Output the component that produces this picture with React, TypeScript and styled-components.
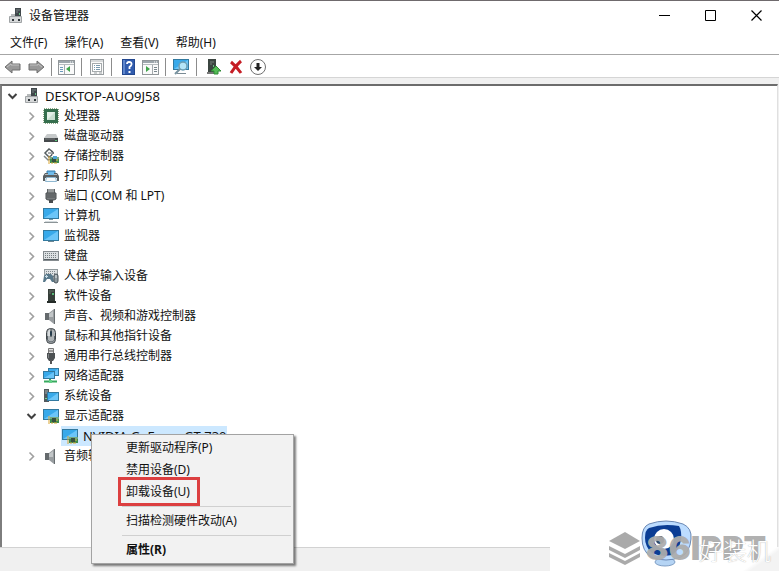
import React from "react";
import styled, { createGlobalStyle, css } from "styled-components";

const GlobalStyle = createGlobalStyle`
  * { box-sizing: border-box; }
  body {
    margin: 0;
    background: #fff;
    color: #111;
    font: 12px/20px "Noto Sans", "Noto Sans CJK SC", sans-serif;
  }
  button { font: inherit; color: inherit; background: none; border: 0; padding: 0; }
  svg { display: block; flex-shrink: 0; }
`;

/* ---------- window frame ---------- */

const Window = styled.div`
  position: relative;
  display: flex;
  flex-direction: column;
  min-height: 100vh;
  overflow: hidden;
  border-top: 1px solid #6f6a6d;
`;

const TitleBar = styled.header`
  display: flex;
  align-items: center;
  height: 29px;
  padding-left: 8px;
`;

const Title = styled.h1`
  flex: 1;
  margin: 0 0 0 5px;
  font-size: 12px;
  font-weight: 400;
`;

const CaptionButton = styled.button`
  display: grid;
  place-items: center;
  width: 46px;
  height: 29px;
`;

const MenuBar = styled.nav`
  display: flex;
  gap: 17px;
  height: 25px;
  padding: 3px 10px 0;
  border-bottom: 1px solid #a6a6a6;
`;

const MenuBarItem = styled.button`
  white-space: nowrap;
  line-height: 20px;
  height: 20px;
`;

const Toolbar = styled.div`
  display: flex;
  align-items: center;
  gap: 6px;
  height: 23px;
  padding: 1px 4px 0;
  border-bottom: 1px solid #d5d5d5;
`;

const ToolGroup = styled.div<{ $inset?: number }>`
  display: flex;
  align-items: center;
  gap: 7px;
  padding-left: ${(p) => p.$inset ?? 0}px;
`;

const ToolButton = styled.button`
  display: grid;
  place-items: center;
  height: 20px;
`;

const Divider = styled.span`
  width: 1px;
  height: 18px;
  background: #8c8c8c;
`;

const Client = styled.main`
  display: flex;
  flex: 1;
  padding: 6px 1px 0 0;
  background: #f0f0f0;
`;

const TreePane = styled.div`
  flex: 1;
  border-top: 2px solid #6c6c6c;
  border-left: 2px solid #7d7d7d;
  border-right: 1px solid #e0e0e0;
  background: #fff;
`;

const StatusBar = styled.footer`
  display: flex;
  height: 24px;
  border-top: 1px solid #d2d2d2;
  background: #f0f0f0;
`;

const StatusBlank = styled.div`
  margin-left: auto;
  margin-top: -1px;
  width: 229px;
  background: linear-gradient(145deg, #fff 86%, #f3f3f3 89%);
`;

/* ---------- tree ---------- */

const TreeList = styled.ul`
  list-style: none;
  margin: 0;
  padding: 0;
`;

const TreeItem = styled.li`
  position: relative;
`;

const TreeRow = styled.div<{ $level: number }>`
  display: flex;
  align-items: center;
  height: 20px;
  padding-left: ${(p) => 2 + p.$level * 19}px;
`;

const Expander = styled.button`
  display: grid;
  place-items: center;
  width: 16px;
  height: 20px;
  margin-right: 3px;
`;

const ExpanderSpace = styled.span`
  width: 19px;
`;

const NodeLabel = styled.span<{ $selected?: boolean; $latin?: boolean }>`
  display: flex;
  align-items: center;
  gap: 5px;
  height: 20px;
  padding: 0 0 0 1px;
  white-space: nowrap;
  font-size: ${(p) => (p.$latin ? 13 : 12)}px;
  ${(p) => p.$selected && css`background: #cce8ff;`}
`;

/* ---------- context menu ---------- */

const ContextMenu = styled.div`
  position: absolute;
  z-index: 2;
  top: 8px;
  left: 89px;
  display: flex;
  flex-direction: column;
  width: 203px;
  padding: 2px;
  border: 1px solid #a3a3a3;
  background: #f2f2f2;
  box-shadow: 2px 2px 2px rgba(0, 0, 0, 0.5);
`;

const ContextItem = styled.button<{ $strong?: boolean }>`
  height: 22px;
  padding-left: 32px;
  line-height: 22px;
  text-align: left;
  white-space: nowrap;
  font-weight: ${(p) => (p.$strong ? 700 : 400)};
`;

const Highlight = styled.span`
  position: relative;

  &::after {
    content: "";
    position: absolute;
    inset: -6px -10px -6px -8px;
    border: 3px solid #dc3f40;
  }
`;

const ContextRule = styled.hr`
  width: calc(100% - 28px);
  margin: 3px 0 3px 28px;
  border: 0;
  border-top: 1px solid #d0d0d0;
`;

/* ---------- watermark ---------- */

const Watermark = styled.div`
  position: absolute;
  right: 6px;
  bottom: 0;
  width: 165px;
  height: 52px;
`;

const WatermarkArt = styled.svg`
  position: absolute;
  inset: 0;
`;

const SiteName = styled.span`
  position: absolute;
  right: 2px;
  top: 17px;
  color: #fff;
  font: 300 24px/28px "Noto Sans CJK SC", sans-serif;
  text-shadow: 0 0 1px #999;
`;

const BrandName = styled.span`
  position: absolute;
  left: 38px;
  top: 12px;
  color: rgba(172, 172, 172, 0.94);
  font: 900 33px/34px Inter, "Liberation Sans", sans-serif;
`;

/* ---------- icons ---------- */

const icon = (body: React.ReactNode, width = 16, height = 16) => (
  <svg width={width} height={height} viewBox={`0 0 ${width} ${height}`} aria-hidden="true">
    {body}
  </svg>
);

const Screen = ({ x, y, w, h }: { x: number; y: number; w: number; h: number }) => (
  <g>
    <rect x={x} y={y} width={w} height={h} fill="#32799f" />
    <rect x={x + 1} y={y + 1} width={w - 2} height={h - 2} fill="#38a9ea" />
    <path d={`M${x + 1} ${y + h - 1}L${x + w - 1} ${y + 1}v${h - 2}z`} fill="#6bc5f8" />
  </g>
);

const Card = () => (
  <g>
    <path d="M7 9h9v6H7z" fill="#3b8c50" />
    <path d="M7 9h9v2H7z" fill="#77a982" />
    <path d="M9 10h4v4H9z" fill="#365040" />
    <path d="M6 8v8M8 15h2m1 0h3" stroke="#d9a632" />
    <path d="M13 12h2" stroke="#e5c04a" />
  </g>
);

const icons = {
  host: icon(
    <>
      <path d="M7 0h6v9H7z" fill="#40474b" />
      <path d="M8 2h4M8 4h2" stroke="#7d8789" />
      <path d="M11 5h1v2h-1z" fill="#69c184" />
      <path d="M3 6h4v3H3z" fill="#b7babb" />
      <path d="M1.500 8.500h12v6h-12z" fill="#d6d8d9" stroke="#a0a4a6" />
      <path d="M4 11h2v2H4zm6 0h2v2h-2z" fill="#30363a" />
    </>
  ),
  cpu: icon(
    <>
      <rect x="1" y="1" width="14" height="14" fill="none" stroke="#8fa888" strokeWidth="2" strokeDasharray="1 1" />
      <rect x="1" y="1" width="14" height="14" fill="#356e4d" />
      <path d="M4 4h8v8H4z" fill="#c9dfd0" />
      <path d="M4 12V4h8z" fill="#e3f0e7" />
    </>
  ),
  disk: icon(
    <>
      <path d="M4 6h9l2 4H1z" fill="#c6c9ca" />
      <path d="M1 10h14v4H1z" fill="#45494b" />
      <path d="M2 11h10" stroke="#74797b" />
      <path d="M12 12h2v1h-2z" fill="#59c97a" />
    </>
  ),
  storage: icon(
    <>
      <path d="M10 4L6 1 2 5l4 4 3-2" fill="none" stroke="#555d60" strokeWidth="1.500" />
      <path d="M5 5h5M8 3l3 2-3 2" fill="none" stroke="#555d60" />
      <path d="M1 8l4 4 3-1" fill="none" stroke="#7c8588" strokeWidth="1.500" />
      <Card />
      <path d="M10 8h4v3h-4z" fill="#4fa5d4" />
    </>
  ),
  printer: icon(
    <>
      <path d="M4 3h8v3H4z" fill="#67afe0" stroke="#3781b3" />
      <path d="M2 5h12l2 3v5h-2v-3H2v3H0V8z" fill="#5a6063" />
      <path d="M2 6.500h12" stroke="#b3b9bc" />
      <path d="M3.500 9.500h9l1 4h-11z" fill="#f6fafc" stroke="#8eb7d0" />
      <path d="M5 4h6v3H5z" fill="#70bcec" />
    </>
  ),
  port: icon(
    <>
      <path d="M4 1h8v5H4z" fill="#5e6264" />
      <path d="M6 1v4m2-4v4m2-4v4" stroke="#d1d4d4" />
      <path d="M3 5h10v6l-2 1H5l-2-1z" fill="#777b7d" stroke="#4a4e50" />
      <path d="M5 6v4m2-4v4m2-4v4m2-4v4" stroke="#535759" />
      <path d="M6 12h4v3H6z" fill="#474b4d" />
    </>
  ),
  computer: icon(
    <>
      <Screen x={0} y={0} w={16} h={11} />
      <path d="M6 11h4v1H6z" fill="#739aac" />
      <path d="M1 14.500h14" stroke="#8c9497" />
      <path d="M2 13.500h12" stroke="#d3dadd" />
    </>
  ),
  monitor: icon(
    <>
      <Screen x={0} y={2} w={16} h={11} />
      <path d="M5 13.500h6" stroke="#6f8792" />
    </>
  ),
  keyboard: icon(
    <>
      <rect x=".5" y="3.500" width="15" height="9" fill="#dce0e2" stroke="#858b8f" />
      <path d="M2 5.500h12M2 7.500h12M2 9.500h12" stroke="#777e82" strokeDasharray="1 1" />
      <path d="M1 11.500h14" stroke="#596166" />
    </>
  ),
  hid: icon(
    <>
      <rect x="1.500" y="1.500" width="13" height="7" fill="#dde1e3" stroke="#929a9d" />
      <path d="M3 3.500h10M3 5.500h10" stroke="#7e878b" strokeDasharray="1 1" />
      <path d="M1 8l2-2h5l2 2 1 6H9l-2-3H4l-2 3H0z" fill="#58788a" />
      <path d="M3.500 7v3M2 8.500h3" stroke="#c7dce6" />
      <rect x="11" y="6" width="4" height="9" rx="2" fill="#8c989d" stroke="#465157" />
      <path d="M13 7v3" stroke="#e6eaec" />
    </>
  ),
  software: icon(
    <>
      <path d="M5 1h7v12H5z" fill="#353e39" />
      <path d="M6 3h5M6 5h2" stroke="#68736c" />
      <path d="M9 5h2v2H9z" fill="#59b878" />
      <path d="M4 13h9v2H4z" fill="#252b28" />
    </>
  ),
  speaker: icon(
    <>
      <path d="M2 5h4v7H2z" fill="#656a6d" />
      <path d="M6 5l5-4v15l-5-4z" fill="#989da0" />
      <path d="M6 6l4-3v6H6z" fill="#c2c6c8" />
      <path d="M11.500 1v15" stroke="#686e71" />
    </>
  ),
  mouse: icon(
    <>
      <rect x="3.500" y=".5" width="9" height="15" rx="4" fill="#afb4b7" stroke="#3e4448" />
      <path d="M5 4c0-2 2-3 3-3v7H5z" fill="#d7dbdd" />
      <path d="M8 1v8" stroke="#30383d" />
      <rect x="7" y="3" width="2" height="5" rx="1" fill="#253b4b" />
      <path d="M4.500 8v4q3.500 4 7 0V8" fill="none" stroke="#596268" />
    </>
  ),
  usb: icon(
    <>
      <path d="M5.500.5h5v5h-5z" fill="#dedede" stroke="#777" />
      <path d="M7 2v2m2-2v2" stroke="#555" />
      <path d="M4 5h8v5l-2 3H6l-2-3z" fill="#4d5153" />
      <path d="M7 12h2v4H7z" fill="#555" />
      <path d="M5 6h1v4H5z" fill="#7e8385" />
    </>
  ),
  network: icon(
    <>
      <Screen x={5} y={0} w={11} h={8} />
      <Screen x={0} y={3} w={12} h={8} />
      <path d="M1 13.500h13M7 11v3" stroke="#36a95e" strokeWidth="2" />
      <path d="M6 12h3v3H6z" fill="#62cf85" />
    </>
  ),
  system: icon(
    <>
      <path d="M1 1h5v13H1z" fill="#50595d" />
      <path d="M2 3h3M2 5h3" stroke="#a3adb1" />
      <path d="M2 10h2v1H2z" fill="#76d48d" />
      <Screen x={4} y={4} w={12} h={9} />
    </>
  ),
  display: icon(
    <>
      <Screen x={0} y={1} w={16} h={11} />
      <Card />
    </>
  ),
};

const arrow = (
  <>
    <path d="M1 8l7-6v3h8v6H8v3z" fill="#999" stroke="#6f6f6f" strokeLinejoin="round" />
    <path d="M3 8l4-3v1h8" fill="none" stroke="#c1c1c1" />
  </>
);

const windowFrame = (
  <>
    <rect x=".5" y="1.500" width="16" height="14" fill="#fafafa" stroke="#919699" />
    <path d="M1 3h15" stroke="#9da6ac" strokeWidth="2" />
    <path d="M12 3h3" stroke="#f8f8f8" strokeDasharray="1 1" />
    <path d="M1 5.500h15" stroke="#b5bbbe" />
  </>
);

const tools = {
  back: icon(arrow, 17),
  forward: icon(<g transform="translate(17 0) scale(-1 1)">{arrow}</g>, 17),
  tree: icon(
    <>
      {windowFrame}
      <path d="M6.500 6v9" stroke="#a4aaad" />
      <path d="M2 8.500h3M2 10.500h3M2 12.500h3" stroke="#6c9abc" />
      <path d="M12 7v6l-4-3z" fill="#3fa449" />
    </>,
    17
  ),
  properties: icon(
    <>
      <rect x="2.500" y=".5" width="13" height="15" fill="#fafafa" stroke="#999ea1" />
      <path d="M3 2h12" stroke="#b3b8ba" />
      <rect x="4.500" y="4.500" width="9" height="8" fill="#fff" stroke="#a6abad" />
      <path d="M6 6.500h1m1 0h4M6 8.500h1m1 0h4M6 10.500h1m1 0h4" stroke="#7999ae" />
      <path d="M6 14h3m2 0h3" stroke="#9ca2a5" />
    </>,
    17
  ),
  help: icon(
    <>
      <rect x=".5" y=".5" width="12" height="15" fill="#315cae" stroke="#23488f" />
      <path d="M1 1h2v14H1z" fill="#5e86cc" />
      <path d="M5 5q0-2 2-2 3 0 2.500 2.500Q9 7 7.500 8v2" fill="none" stroke="#fff" strokeWidth="1.800" />
      <path d="M6.500 12h2v2h-2z" fill="#fff" />
    </>,
    13
  ),
  action: icon(
    <>
      {windowFrame}
      <path d="M10.500 6v9" stroke="#a4aaad" />
      <path d="M12 8.500h3M12 10.500h3M12 12.500h3" stroke="#78858c" />
      <path d="M4 7v6l4-3z" fill="#3fa449" />
    </>,
    17
  ),
  scan: icon(
    <>
      <Screen x={1} y={0} w={16} h={11} />
      <path d="M5 14.500h9" stroke="#7a8b94" />
      <circle cx="11" cy="7" r="4" fill="#b5e5f7" stroke="#6c9eb3" strokeWidth="1.500" />
      <path d="M8 10l-5 5" stroke="#77929f" strokeWidth="2" />
    </>,
    18
  ),
  update: icon(
    <>
      <path d="M1 0h8v14H1z" fill="#3b4540" />
      <path d="M3 3h4M3 5h2" stroke="#76807a" />
      <path d="M6 6h1v2H6z" fill="#66be81" />
      <path d="M0 14h9" stroke="#777" strokeWidth="2" />
      <path d="M9 7l5 5h-3v3H7v-3H4z" fill="#52bb54" stroke="#318b36" />
    </>,
    15
  ),
  uninstall: icon(<path d="M2 3q5 4 10 11M12 2Q6 7 2 14" fill="none" stroke="#c51d25" strokeWidth="3" />, 14),
  disable: icon(
    <>
      <circle cx="8" cy="8" r="7.500" fill="#fff" stroke="#707070" />
      <path d="M6.500 4h3v4H12l-4 4-4-4h2.500z" fill="#222" />
    </>
  ),
};

const Chevron = ({ open }: { open?: boolean }) => (
  <svg width="11" height="11" viewBox="0 0 11 11" aria-hidden="true">
    <path
      d={open ? "M1.500 3l4 4 4-4" : "M3.500 1.500l4 4-4 4"}
      fill="none"
      stroke={open ? "#404040" : "#a0a0a0"}
      strokeWidth={open ? 2 : 1.6}
    />
  </svg>
);

/* ---------- data ---------- */

type Node = {
  label: string;
  icon: keyof typeof icons;
  children?: Node[];
  selected?: boolean;
  latin?: boolean;
};

const tree: Node = {
  label: "DESKTOP-AUO9J58",
  icon: "host",
  latin: true,
  children: [
    { label: "处理器", icon: "cpu" },
    { label: "磁盘驱动器", icon: "disk" },
    { label: "存储控制器", icon: "storage" },
    { label: "打印队列", icon: "printer" },
    { label: "端口 (COM 和 LPT)", icon: "port" },
    { label: "计算机", icon: "computer" },
    { label: "监视器", icon: "monitor" },
    { label: "键盘", icon: "keyboard" },
    { label: "人体学输入设备", icon: "hid" },
    { label: "软件设备", icon: "software" },
    { label: "声音、视频和游戏控制器", icon: "speaker" },
    { label: "鼠标和其他指针设备", icon: "mouse" },
    { label: "通用串行总线控制器", icon: "usb" },
    { label: "网络适配器", icon: "network" },
    { label: "系统设备", icon: "system" },
    {
      label: "显示适配器",
      icon: "display",
      children: [{ label: "NVIDIA GeForce GT 730", icon: "display", selected: true, latin: true }],
    },
    { label: "音频输入和输出", icon: "speaker" },
  ],
};

const DeviceMenu = () => (
  <ContextMenu role="menu">
    <ContextItem role="menuitem">更新驱动程序(P)</ContextItem>
    <ContextItem role="menuitem">禁用设备(D)</ContextItem>
    <ContextItem role="menuitem">
      <Highlight>卸载设备(U)</Highlight>
    </ContextItem>
    <ContextRule />
    <ContextItem role="menuitem">扫描检测硬件改动(A)</ContextItem>
    <ContextRule />
    <ContextItem role="menuitem" $strong>属性(R)</ContextItem>
  </ContextMenu>
);

const TreeNode = ({ node, level = 0 }: { node: Node; level?: number }) => {
  const open = Boolean(node.children);
  return (
    <TreeItem role="treeitem" aria-selected={Boolean(node.selected)}>
      <TreeRow $level={level}>
        {level < 2 ? (
          <Expander aria-label={node.label} aria-expanded={open}>
            <Chevron open={open} />
          </Expander>
        ) : (
          <ExpanderSpace />
        )}
        <NodeLabel $selected={node.selected} $latin={node.latin}>
          {icons[node.icon]}
          {node.label}
        </NodeLabel>
      </TreeRow>
      {node.children && (
        <TreeList role="group">
          {node.children.map((child) => (
            <TreeNode key={child.label} node={child} level={level + 1} />
          ))}
        </TreeList>
      )}
      {node.selected && <DeviceMenu />}
    </TreeItem>
  );
};

const Tool = ({ name, label }: { name: keyof typeof tools; label: string }) => (
  <ToolButton aria-label={label}>{tools[name]}</ToolButton>
);

export default function App() {
  return (
    <>
      <GlobalStyle />
      <Window>
        <TitleBar>
          {icons.host}
          <Title>设备管理器</Title>
          <CaptionButton aria-label="最小化">
            <svg width="11" height="11"><path d="M0 5.500h11" stroke="#000" /></svg>
          </CaptionButton>
          <CaptionButton aria-label="最大化">
            <svg width="11" height="11"><path d="M.5.5h10v10H.5z" fill="none" stroke="#000" /></svg>
          </CaptionButton>
          <CaptionButton aria-label="关闭">
            <svg width="11" height="11"><path d="M.5.5l10 10m0-10l-10 10" stroke="#000" strokeWidth="1.200" /></svg>
          </CaptionButton>
        </TitleBar>
        <MenuBar>
          <MenuBarItem>文件(F)</MenuBarItem>
          <MenuBarItem>操作(A)</MenuBarItem>
          <MenuBarItem>查看(V)</MenuBarItem>
          <MenuBarItem>帮助(H)</MenuBarItem>
        </MenuBar>
        <Toolbar role="toolbar">
          <ToolGroup>
            <Tool name="back" label="后退" />
            <Tool name="forward" label="前进" />
          </ToolGroup>
          <Divider />
          <Tool name="tree" label="显示控制台树" />
          <Divider />
          <Tool name="properties" label="属性" />
          <Divider />
          <ToolGroup $inset={4}>
            <Tool name="help" label="帮助" />
            <Tool name="action" label="操作窗格" />
          </ToolGroup>
          <Divider />
          <Tool name="scan" label="扫描检测硬件改动" />
          <Divider />
          <ToolGroup $inset={4}>
            <Tool name="update" label="更新驱动程序" />
            <Tool name="uninstall" label="卸载设备" />
            <Tool name="disable" label="禁用设备" />
          </ToolGroup>
        </Toolbar>
        <Client>
          <TreePane>
            <TreeList role="tree">
              <TreeNode node={tree} />
            </TreeList>
          </TreePane>
        </Client>
        <StatusBar>
          <StatusBlank />
        </StatusBar>
        <Watermark>
          <WatermarkArt width="165" height="52" viewBox="0 0 165 52" aria-hidden="true">
            <path d="M1 22l16-9 15 9-15 8z" fill="#aaa" />
            <path d="M1 27l16 8 15-8v4l-15 8-16-8zm0 7l16 8 15-8v4l-15 8-16-8z" fill="#aaa" />
            <ellipse cx="57" cy="43" rx="10" ry="4" fill="#b5d4f4" stroke="#7f9fc5" />
            <path d="M41 5Q58-1 75 5q9 4 8 15-1 13-10 18-15 6-30 0-9-6-9-19 0-11 7-14z" fill="#bcdcff" stroke="#6a88b4" />
            <path d="M41 9q14-5 30-2 3 5 2 14-2 10-9 15-12 2-20-2-7-6-7-15 0-8 4-10z" fill="#0b3d94" />
            <circle cx="56" cy="20" r="10" fill="#fff" />
            <circle cx="52" cy="21" r="4" fill="#314966" />
          </WatermarkArt>
          <BrandName>86IPPT</BrandName>
          <SiteName>好装机</SiteName>
        </Watermark>
      </Window>
    </>
  );
}
